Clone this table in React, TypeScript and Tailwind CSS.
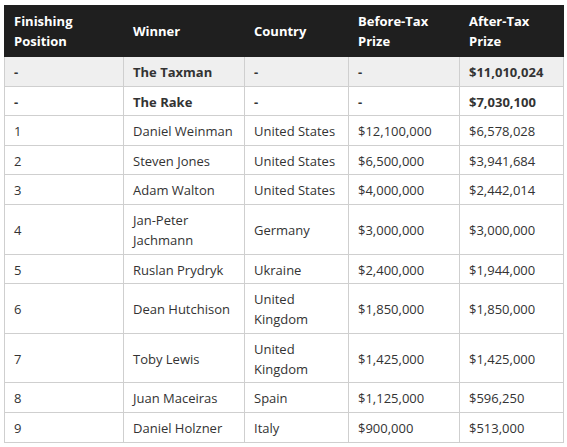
const rows = [
  { pos: "-", winner: "The Taxman", country: "-", before: "-", after: "$11,010,024", bold: true },
  { pos: "-", winner: "The Rake", country: "-", before: "-", after: "$7,030,100", bold: true },
  { pos: "1", winner: "Daniel Weinman", country: "United States", before: "$12,100,000", after: "$6,578,028" },
  { pos: "2", winner: "Steven Jones", country: "United States", before: "$6,500,000", after: "$3,941,684" },
  { pos: "3", winner: "Adam Walton", country: "United States", before: "$4,000,000", after: "$2,442,014" },
  { pos: "4", winner: "Jan-Peter Jachmann", country: "Germany", before: "$3,000,000", after: "$3,000,000" },
  { pos: "5", winner: "Ruslan Prydryk", country: "Ukraine", before: "$2,400,000", after: "$1,944,000" },
  { pos: "6", winner: "Dean Hutchison", country: "United Kingdom", before: "$1,850,000", after: "$1,850,000" },
  { pos: "7", winner: "Toby Lewis", country: "United Kingdom", before: "$1,425,000", after: "$1,425,000" },
  { pos: "8", winner: "Juan Maceiras", country: "Spain", before: "$1,125,000", after: "$596,250" },
  { pos: "9", winner: "Daniel Holzner", country: "Italy", before: "$900,000", after: "$513,000" },
];

const headers = ["Finishing Position", "Winner", "Country", "Before-Tax Prize", "After-Tax Prize"];

export default function App() {
  return (
    <div className="w-[567px] h-[447px] bg-white pt-[5px] pl-[4px] font-['Open_Sans',sans-serif] text-[13px] leading-[20px] text-[#333]">
      <table className="w-[559px] table-fixed border-collapse">
        <colgroup>
          <col className="w-[119px]" />
          <col className="w-[121px]" />
          <col className="w-[104px]" />
          <col className="w-[111px]" />
          <col className="w-[104px]" />
        </colgroup>
        <thead>
          <tr className="bg-[#1f1f1f] text-white">
            {headers.map((h) => (
              <th key={h} className="border border-[#1f1f1f] px-[9px] pt-[5px] pb-[5px] text-left font-bold">
                {h}
              </th>
            ))}
          </tr>
        </thead>
        <tbody>
          {rows.map((r, i) => (
            <tr key={i} className={i === 0 ? "bg-[#efefef] font-bold" : r.bold ? "font-bold" : ""}>
              {[r.pos, r.winner, r.country, r.before, r.after].map((c, j) => (
                <td key={j} className="border border-[#cfcfcf] px-[9px] pt-[5px] pb-[3.6px] align-middle">
                  {c}
                </td>
              ))}
            </tr>
          ))}
        </tbody>
      </table>
    </div>
  );
}
